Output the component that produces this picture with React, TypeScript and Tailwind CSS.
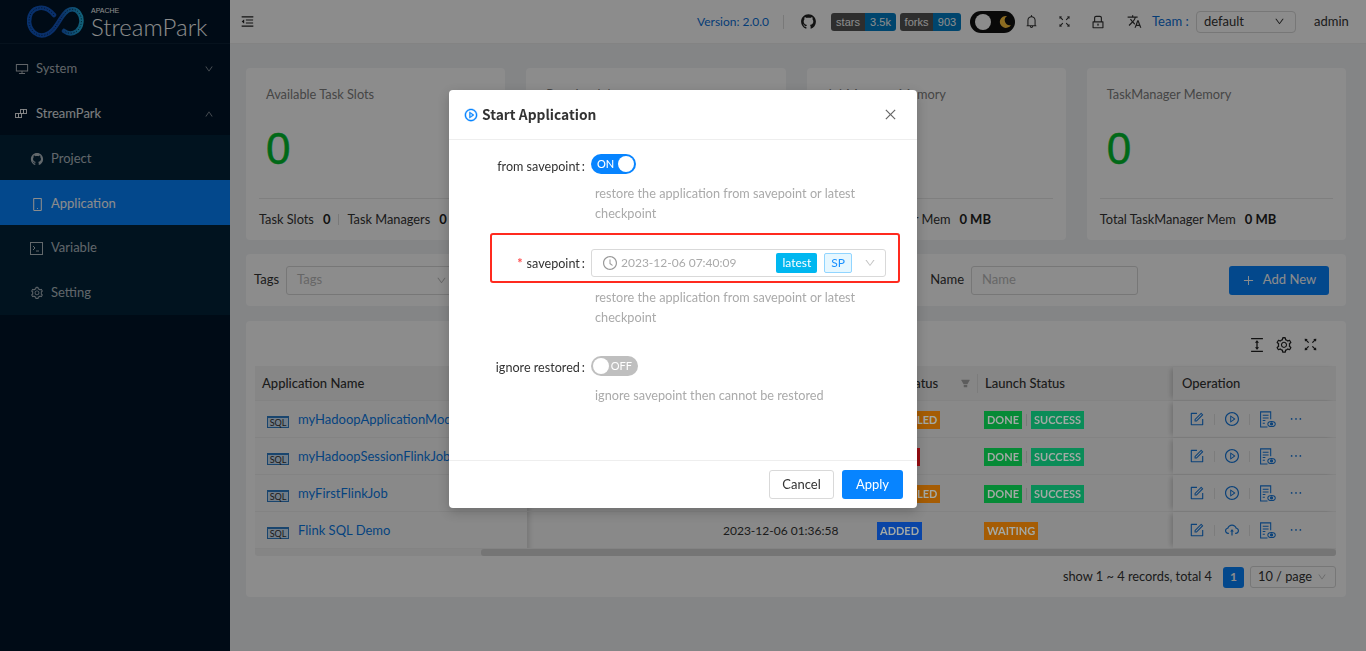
import React from "react";
import {
  AiOutlineDesktop, AiOutlineDown, AiOutlineUp, AiOutlineMobile, AiOutlineSetting,
  AiOutlineClockCircle, AiOutlinePlayCircle, AiOutlinePlus, AiOutlineBell, AiOutlineFullscreen,
  AiOutlineLock, AiOutlineForm, AiOutlineEllipsis, AiOutlineCloudUpload, AiFillFilter,
  AiOutlineColumnHeight, AiOutlineMenuFold, AiOutlineClose, AiFillGithub,
} from "react-icons/ai";
import { MdTranslate } from "react-icons/md";

const font = "font-['Lato','Noto_Sans',sans-serif]";
const LOOP = "M27 11C22 5 17 3 12 4C5 5 2 11 2 18C3 27 10 33 18 31C27 29 31 17 38 9C42 4 49 4 52 9C56 14 55 23 50 27C46 30 41 30 37 27";

function Logo() {
  return (
    <div className="h-[44px] flex items-center border-b border-[#0c2236] pl-[27px] shrink-0">
      <svg width="57" height="36" viewBox="0 0 57 36" fill="none">
        <defs>
          <linearGradient id="lg" x1="0" y1="0" x2="1" y2="0">
            <stop offset="0" stopColor="#0e58c4" />
            <stop offset="0.6" stopColor="#1457c0" />
            <stop offset="1" stopColor="#1fb0dc" />
          </linearGradient>
        </defs>
        <path d={LOOP} stroke="url(#lg)" strokeWidth="4.5" strokeLinecap="round" />
        <path d={LOOP} stroke="#001529" strokeWidth="1" strokeDasharray="1.2 1.6" opacity="0.7" />
      </svg>
      <div className="ml-[7px] flex flex-col text-white mt-[1px]">
        <span className="text-[7px] leading-[9px] font-['Liberation_Sans',sans-serif]">APACHE</span>
        <span className="text-[24px] leading-[23px] font-['Lato',sans-serif] font-light">StreamPark</span>
      </div>
    </div>
  );
}

function BlocksIcon() {
  return (
    <svg width="12" height="12" viewBox="0 0 12 12" fill="none" stroke="currentColor" strokeWidth="1">
      <rect x="5.5" y="1.5" width="3" height="4" />
      <rect x="8.5" y="1.5" width="3" height="4" />
      <rect x="0.5" y="5.5" width="3" height="4" />
      <rect x="3.5" y="5.5" width="3" height="4" />
    </svg>
  );
}

function TerminalIcon() {
  return (
    <svg width="13" height="13" viewBox="0 0 13 13" fill="none" stroke="currentColor" strokeWidth="1">
      <rect x="0.5" y="0.5" width="12" height="12" />
      <path d="M3 4l2 2-2 2M6 9h3" />
    </svg>
  );
}

function SideItem({ icon, label, active, sub, strong, arrow, tight }: { icon: React.ReactNode; label: string; active?: boolean; sub?: boolean; strong?: boolean; arrow?: React.ReactNode; tight?: boolean }) {
  return (
    <div className={`flex items-center h-[45px] ${tight ? "pt-[1px]" : "pt-[3px]"} ${sub ? "pl-[30px]" : "pl-[15px]"} pr-[16px] text-[13px] ${active ? "bg-[#0784ff] text-white" : strong ? "text-white/90" : "text-white/70"}`}>
      <span className="w-[21px] flex items-center shrink-0">{icon}</span>
      <span>{label}</span>
      {arrow && <span className="ml-auto text-[10px] text-white/60">{arrow}</span>}
    </div>
  );
}

function Sidebar() {
  return (
    <aside className="w-[230px] shrink-0 bg-[#001529] flex flex-col">
      <Logo />
      <div className="mt-[1px]">
        <SideItem icon={<AiOutlineDesktop size={14} />} label="System" arrow={<AiOutlineDown />} />
        <SideItem icon={<BlocksIcon />} label="StreamPark" strong arrow={<AiOutlineUp />} />
        <div className="bg-[#02233a]">
          <SideItem sub icon={<AiFillGithub size={14} />} label="Project" />
          <SideItem sub active icon={<AiOutlineMobile size={15} />} label="Application" />
          <SideItem sub tight icon={<TerminalIcon />} label="Variable" />
          <SideItem sub tight icon={<AiOutlineSetting size={14} />} label="Setting" />
        </div>
      </div>
    </aside>
  );
}

function Badge({ l, r, w1, w2 }: { l: string; r: string; w1: string; w2: string }) {
  return (
    <div className="flex h-[18px] rounded-[3px] overflow-hidden text-[11px] leading-[18px] text-white font-['Liberation_Sans',sans-serif]">
      <span className={`${w1} text-center bg-[#555]`}>{l}</span>
      <span className={`${w2} text-center bg-[#007ec6]`}>{r}</span>
    </div>
  );
}

function Header() {
  return (
    <header className="h-[44px] bg-white flex items-center shrink-0 border-b border-[#eee] pl-[10px] text-[#333]">
      <AiOutlineMenuFold size={15} className="text-[#222]" />
      <div className="ml-[442px] text-[12px] text-[#0a6fd8] w-[72px] whitespace-nowrap">Version: 2.0.0</div>
      <div className="ml-[14px] h-[14px] w-px bg-[#ddd]" />
      <AiFillGithub size={17} className="ml-[16px] text-[#222]" />
      <div className="ml-[14px] flex gap-[4px]">
        <Badge l="stars" r="3.5k" w1="w-[34px]" w2="w-[31px]" />
        <Badge l="forks" r="903" w1="w-[33px]" w2="w-[28px]" />
      </div>
      <div className="ml-[9px] w-[45px] h-[22px] rounded-full bg-[#111] flex items-center pl-[5px] pr-[3px] justify-between">
        <span className="w-[16px] h-[16px] rounded-full bg-white" />
        <svg width="14" height="14" viewBox="0 0 14 14"><path d="M9 1a6 6 0 1 0 4 9 5 5 0 0 1-4-9z" fill="#ffc53d" /></svg>
      </div>
      <AiOutlineBell size={15} className="ml-[9px]" />
      <AiOutlineFullscreen size={15} className="ml-[18px]" />
      <AiOutlineLock size={16} className="ml-[18px]" />
      <MdTranslate size={15} className="ml-[21px]" />
      <span className="ml-[10px] text-[13px] text-[#0a6fd8] w-[38px] whitespace-nowrap">Team :</span>
      <div className="ml-[6px] w-[100px] h-[22px] rounded-[4px] border border-[#d9d9d9] flex items-center pl-[7px] pr-[10px] text-[13px]">
        default
        <AiOutlineDown size={11} className="ml-auto" />
      </div>
      <span className="ml-[18px] text-[13px]">admin</span>
    </header>
  );
}

function Stat({ title, kv }: { title: string; kv: [string, string][] }) {
  return (
    <div className="bg-white rounded-[4px] h-[172px] px-[13px] flex flex-col">
      <div className="pl-[7px] pt-[16px] text-[12.8px] leading-[20px] text-[#808080]">{title}</div>
      <div className="pl-[7px] mt-[20px] text-[44px] leading-[50px] font-['Liberation_Sans',sans-serif] text-[#00c02c] [-webkit-text-stroke:0.5px_#00c02c] h-[74px]">0</div>
      <div className="border-t border-[#e8e8e8] flex items-center h-[42px] text-[12.8px] text-[#333] whitespace-nowrap">
        {kv.map(([k, v], i) => (
          <React.Fragment key={k}>
            {i > 0 && <span className="mx-[8px] w-px h-[11px] bg-[#ddd]" />}
            <span>{k}</span>
            <b className="ml-[9px] font-bold text-[13px] text-[#222]">{v}</b>
          </React.Fragment>
        ))}
      </div>
    </div>
  );
}

function Tag({ children, className }: { children: React.ReactNode; className: string }) {
  return <span className={`relative z-20 inline-block h-[18px] leading-[18px] px-[3px] text-[11px] font-bold text-[#a3a9a5] whitespace-nowrap ${className}`}>{children}</span>;
}

function DocEye() {
  return (
    <svg width="17" height="17" viewBox="0 0 16 16" fill="none" stroke="currentColor" strokeWidth="1">
      <path d="M8 15H1.5V.8h9.5v7" />
      <path d="M3.5 4h5.5M3.5 6.5h5.5M3.5 9h2.5M3.5 11.5h2" />
      <ellipse cx="11.8" cy="12.2" rx="3.5" ry="2.4" />
      <circle cx="11.8" cy="12.2" r="1" fill="currentColor" />
    </svg>
  );
}

function Row({ name, time, status, statusClass, launch, upload }: { name: string; time: string; status: string; statusClass: string; launch: React.ReactNode; upload?: boolean }) {
  return (
    <div className="flex h-[37px] items-center border-b border-[#efefef] bg-[#fafafa] text-[13px]">
      <div className="w-[272px] pl-[12px] pt-[2px] flex items-center whitespace-nowrap overflow-hidden h-full">
        <span className="w-[22px] h-[12px] mt-[3px] mr-[9px] border border-[#2f7fc8] border-t-[2px] text-[9px] leading-[9px] text-center text-[#333] shrink-0 bg-[#cfe4f7]">SQL</span>
        <span className="text-[#0a7ae8]">{name}</span>
      </div>
      <div className="w-[340px] pl-[195px] pt-[2px] text-[12px] text-[#333] whitespace-nowrap border-l border-[#e0e0e0] h-full flex items-center shadow-[inset_6px_0_6px_-6px_rgba(0,0,0,0.2)]">{time}</div>
      <div className="w-[110px] pl-[10px] pt-[2px]"><Tag className={statusClass}>{status}</Tag></div>
      <div className="w-[196px] pl-[7px] pt-[2px] flex items-center">{launch}</div>
      <div className="w-[163px] h-full flex items-center pl-[16px] text-[#1678dc] shadow-[-4px_0_5px_-2px_rgba(0,0,0,0.18)]">
        <AiOutlineForm size={16} />
        <span className="mx-[9px] w-px h-[11px] bg-[#e2e2e2]" />
        {upload ? <AiOutlineCloudUpload size={16} /> : <AiOutlinePlayCircle size={16} />}
        <span className="mx-[9px] w-px h-[11px] bg-[#e2e2e2]" />
        <DocEye />
        <AiOutlineEllipsis size={16} className="ml-[12px]" />
      </div>
    </div>
  );
}

const doneSuccess = (
  <>
    <Tag className="bg-[#068a36]">DONE</Tag>
    <span className="mx-[4px] w-px h-[12px] bg-[#ddd]" />
    <Tag className="bg-[#0a8c58]">SUCCESS</Tag>
  </>
);

function Page() {
  return (
    <main className="flex-1 min-w-0 flex flex-col bg-[#f0f2f5]">
      <Header />
      <div className="flex-1 flex">
        <div className="flex-1 pl-[16px] pr-[14px] pt-[24px] flex flex-col">
          <div className="grid grid-cols-4 gap-[21px]">
            <Stat title="Available Task Slots" kv={[["Task Slots", "0"], ["Task Managers", "0"]]} />
            <Stat title="Running Jobs" kv={[["Total Jobs", "0"]]} />
            <Stat title="JobManager Memory" kv={[["Total JobManager Mem", "0 MB"]]} />
            <Stat title="TaskManager Memory" kv={[["Total TaskManager Mem", "0 MB"]]} />
          </div>
          <div className="mt-[14px] h-[52px] bg-white rounded-[4px] flex items-center pl-[8px] pr-[17px] text-[13px] text-[#333]">
            <span className="w-[26px]">Tags</span>
            <div className="ml-[6px] w-[170px] h-[29px] border border-[#d9d9d9] rounded-[3px] pl-[10px] flex items-center text-[#bbb]">Tags<AiOutlineDown size={11} className="ml-auto mr-[8px]" /></div>
            <span className="ml-auto">Name</span>
            <div className="ml-[7px] w-[167px] h-[29px] border border-[#d9d9d9] rounded-[3px] pl-[10px] flex items-center text-[#bbb]">Name</div>
            <div className="ml-[91px] w-[100px] h-[29px] rounded-[3px] bg-[#0784ff] text-white flex items-center justify-center gap-[8px]"><AiOutlinePlus size={13} />Add New</div>
          </div>
          <div className="mt-[15px] h-[276px] bg-white rounded-[4px] pl-[9px] pr-[10px] flex flex-col">
            <div className="h-[45px] flex items-center justify-end gap-[9px] pr-[17px] pt-[2px] text-[#222]">
              <AiOutlineColumnHeight size={18} />
              <AiOutlineSetting size={18} />
              <AiOutlineFullscreen size={17} />
            </div>
            <div className="flex h-[35px] pt-[1px] items-center bg-[#f5f5f5] border-b border-[#efefef] text-[13px] font-medium text-[#333]">
              <div className="w-[272px] pl-[7px]">Application Name</div>
              <div className="w-[340px] pl-[196px]">Modify Time</div>
              <div className="w-[110px] pl-[10px] flex items-center">Run Status<AiFillFilter size={11} className="ml-auto mr-[6px] text-[#aaa]" /></div>
              <div className="w-[196px] pl-[7px] border-l border-[#e2e2e2]">Launch Status</div>
              <div className="w-[163px] pl-[9px] h-full flex items-center shadow-[-4px_0_5px_-2px_rgba(0,0,0,0.18)]">Operation</div>
            </div>
            <Row name="myHadoopApplicationMode" time="2023-12-06 07:40:09" status="CANCELED" statusClass="bg-[#a55c04]" launch={doneSuccess} />
            <Row name="myHadoopSessionFlinkJob" time="2023-12-06 03:12:44" status="FAILED" statusClass="bg-[#980d12]" launch={doneSuccess} />
            <Row name="myFirstFlinkJob" time="2023-12-06 02:20:31" status="CANCELED" statusClass="bg-[#a55c04]" launch={doneSuccess} />
            <Row name="Flink SQL Demo" time="2023-12-06 01:36:58" status="ADDED" statusClass="bg-[#0a45a6]" upload launch={<Tag className="bg-[#a55c04]">WAITING</Tag>} />
            <div className="h-[7px] bg-[#f2f2f2] rounded-b-[3px] pl-[226px]"><div className="h-full bg-[#d5d5d5] rounded-[3px]" /></div>
            <div className="flex-1 flex items-center justify-end text-[12.8px] text-[#333] pt-[1px]">
              <span>show 1 ~ 4 records, total 4</span>
              <span className="ml-[11px] w-[21px] h-[21px] rounded-[3px] bg-[#0784ff] text-white font-bold flex items-center justify-center text-[12px]">1</span>
              <div className="ml-[6px] w-[86px] h-[22px] rounded-[3px] border border-[#d9d9d9] flex items-center pl-[7px] pr-[8px] whitespace-nowrap">10 / page<AiOutlineDown size={10} className="ml-auto text-[#bbb]" /></div>
            </div>
          </div>
        </div>
        <div className="w-[6px] bg-[#f5f5f5]" />
      </div>
    </main>
  );
}

function FormRow({ label, required, children }: { label: string; required?: boolean; children: React.ReactNode }) {
  return (
    <div className="flex">
      <div className="w-[142px] h-[32px] leading-[32px] text-right pr-[5px] text-[12.6px] text-[#333] whitespace-nowrap">
        {required && <span className="text-[#ff4d4f] font-bold mr-[4px]">*</span>}
        {label}<span className="ml-[2px] mr-[1px]">:</span>
      </div>
      <div className="w-[295px]">{children}</div>
    </div>
  );
}

function Hint({ children, className }: { children: React.ReactNode; className?: string }) {
  return <div className={`ml-[146px] w-[275px] text-[12.7px] leading-[20px] text-[#aaa] ${className ?? ""}`}>{children}</div>;
}

function Modal() {
  return (
    <>
      <div className="fixed inset-0 z-10 bg-black/45" />
      <div className="fixed top-[90px] left-[449px] z-30 w-[468px] h-[418px] bg-white rounded-[4px] shadow-[0_4px_12px_rgba(0,0,0,0.2)] flex flex-col">
        <div className="h-[50px] border-b border-[#eee] flex items-center pl-[15px] pr-[19px] shrink-0">
          <AiOutlinePlayCircle size={14} className="text-[#0784ff] stroke-[30px]" />
          <span className="ml-[4px] text-[13.8px] font-bold text-[#333] font-['Noto_Sans_CJK_SC',sans-serif]">Start Application</span>
          <AiOutlineClose size={15} className="ml-auto text-[#666]" />
        </div>
        <div className="flex-1 pt-[11px]">
          <FormRow label="from savepoint">
            <div className="mt-[3px] w-[45px] h-[20px] rounded-full bg-[#0784ff] flex items-center justify-between pl-[6px] pr-[2px] text-[11px] font-medium text-white">
              <span>ON</span>
              <span className="w-[16px] h-[16px] rounded-full bg-white" />
            </div>
          </FormRow>
          <Hint>restore the application from savepoint or latest checkpoint</Hint>
          <div className="mt-[25px]">
            <FormRow label="savepoint" required>
              <div className="mt-[1px] h-[28px] border border-[#d9d9d9] rounded-[3px] flex items-center pl-[10px] pr-[9px] text-[12px] text-[#aaa]">
                <AiOutlineClockCircle size={16} className="text-[#999]" />
                <span className="ml-[3px]">2023-12-06 07:40:09</span>
                <span className="ml-auto h-[20px] leading-[20px] px-[6px] rounded-[2px] bg-[#00b7f0] text-white text-[12px]">latest</span>
                <span className="ml-[7px] h-[20px] leading-[18px] px-[6px] rounded-[2px] bg-[#e6f7ff] border border-[#91d5ff] text-[#1890ff] text-[12px]">SP</span>
                <AiOutlineDown size={12} className="ml-[12px] text-[#c4c4c4]" />
              </div>
            </FormRow>
          </div>
          <Hint className="mt-[7px]">restore the application from savepoint or latest checkpoint</Hint>
          <div className="mt-[25px]">
            <FormRow label="ignore restored">
              <div className="mt-[4px] w-[47px] h-[20px] rounded-full bg-[#bfbfbf] flex items-center justify-between pl-[2px] pr-[6px] text-[11px] text-white">
                <span className="w-[16px] h-[16px] rounded-full bg-white" />
                <span>OFF</span>
              </div>
            </FormRow>
          </div>
          <Hint className="mt-[1px]">ignore savepoint then cannot be restored</Hint>
        </div>
        <div className="h-[48px] border-t border-[#eee] flex items-center justify-end gap-[8px] pr-[14px] shrink-0 text-[13px]">
          <div className="w-[65px] h-[29px] rounded-[3px] border border-[#d9d9d9] flex items-center justify-center text-[#333]">Cancel</div>
          <div className="w-[61px] h-[29px] rounded-[3px] bg-[#0784ff] flex items-center justify-center text-white">Apply</div>
        </div>
        <div className="absolute left-[41px] top-[143px] w-[410px] h-[50px] border-2 border-[#ff2a1f] rounded-[3px]" />
      </div>
    </>
  );
}

export default function App() {
  return (
    <div className={`flex h-[651px] w-[1366px] overflow-hidden ${font}`}>
      <Sidebar />
      <Page />
      <Modal />
    </div>
  );
}
